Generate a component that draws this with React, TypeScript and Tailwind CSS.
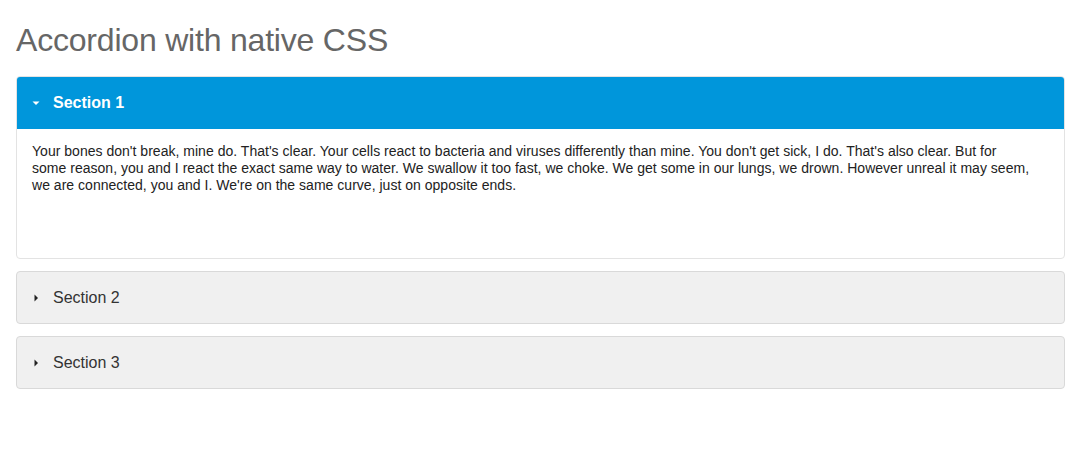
import React from "react";

const lines = [
  "Your bones don't break, mine do. That's clear. Your cells react to bacteria and viruses differently than mine. You don't get sick, I do. That's also clear. But for",
  "some reason, you and I react the exact same way to water. We swallow it too fast, we choke. We get some in our lungs, we drown. However unreal it may seem,",
  "we are connected, you and I. We're on the same curve, just on opposite ends.",
];

function Caret({ open, color }: { open: boolean; color: string }) {
  return (
    <svg width="8" height="8" viewBox="0 0 8 8" className="shrink-0">
      {open ? (
        <polygon points="0.5,2.5 7.5,2.5 4,6" fill={color} />
      ) : (
        <polygon points="2.5,0.5 6,4 2.5,7.5" fill={color} />
      )}
    </svg>
  );
}

export default function App() {
  return (
    <div
      className="min-h-[449px] bg-white pl-4 pr-5 pt-[20px]"
      style={{ fontFamily: '"Liberation Sans", Arial, sans-serif' }}
    >
      <h1 className="text-[32px] leading-[40px] font-normal text-[#666] tracking-[-0.2px]">
        Accordion with native CSS
      </h1>
      <div className="mt-[16px] flex flex-col gap-[12px]">
        <div className="rounded-[4px] border border-[#e3e3e3] overflow-hidden">
          <div className="-m-px flex h-[53px] items-center gap-[13px] rounded-t-[4px] bg-[#0096db] pl-[16px]">
            <Caret open color="#ffffff" />
            <span className="text-[16px] font-bold text-white">Section 1</span>
          </div>
          <p className="h-[130px] px-[15px] pt-[15px] text-[14px] leading-[17px] tracking-[0.02px] text-[#222]">
            {lines.map((l, i) => (
              <React.Fragment key={i}>
                {l}
                {i < lines.length - 1 && <br />}
              </React.Fragment>
            ))}
          </p>
        </div>
        {["Section 2", "Section 3"].map((s) => (
          <div
            key={s}
            className="flex h-[53px] items-center gap-[13px] rounded-[4px] border border-[#d9d9d9] bg-[#f0f0f0] pl-[15px]"
          >
            <Caret open={false} color="#222" />
            <span className="text-[16px] text-[#333]">{s}</span>
          </div>
        ))}
      </div>
    </div>
  );
}
